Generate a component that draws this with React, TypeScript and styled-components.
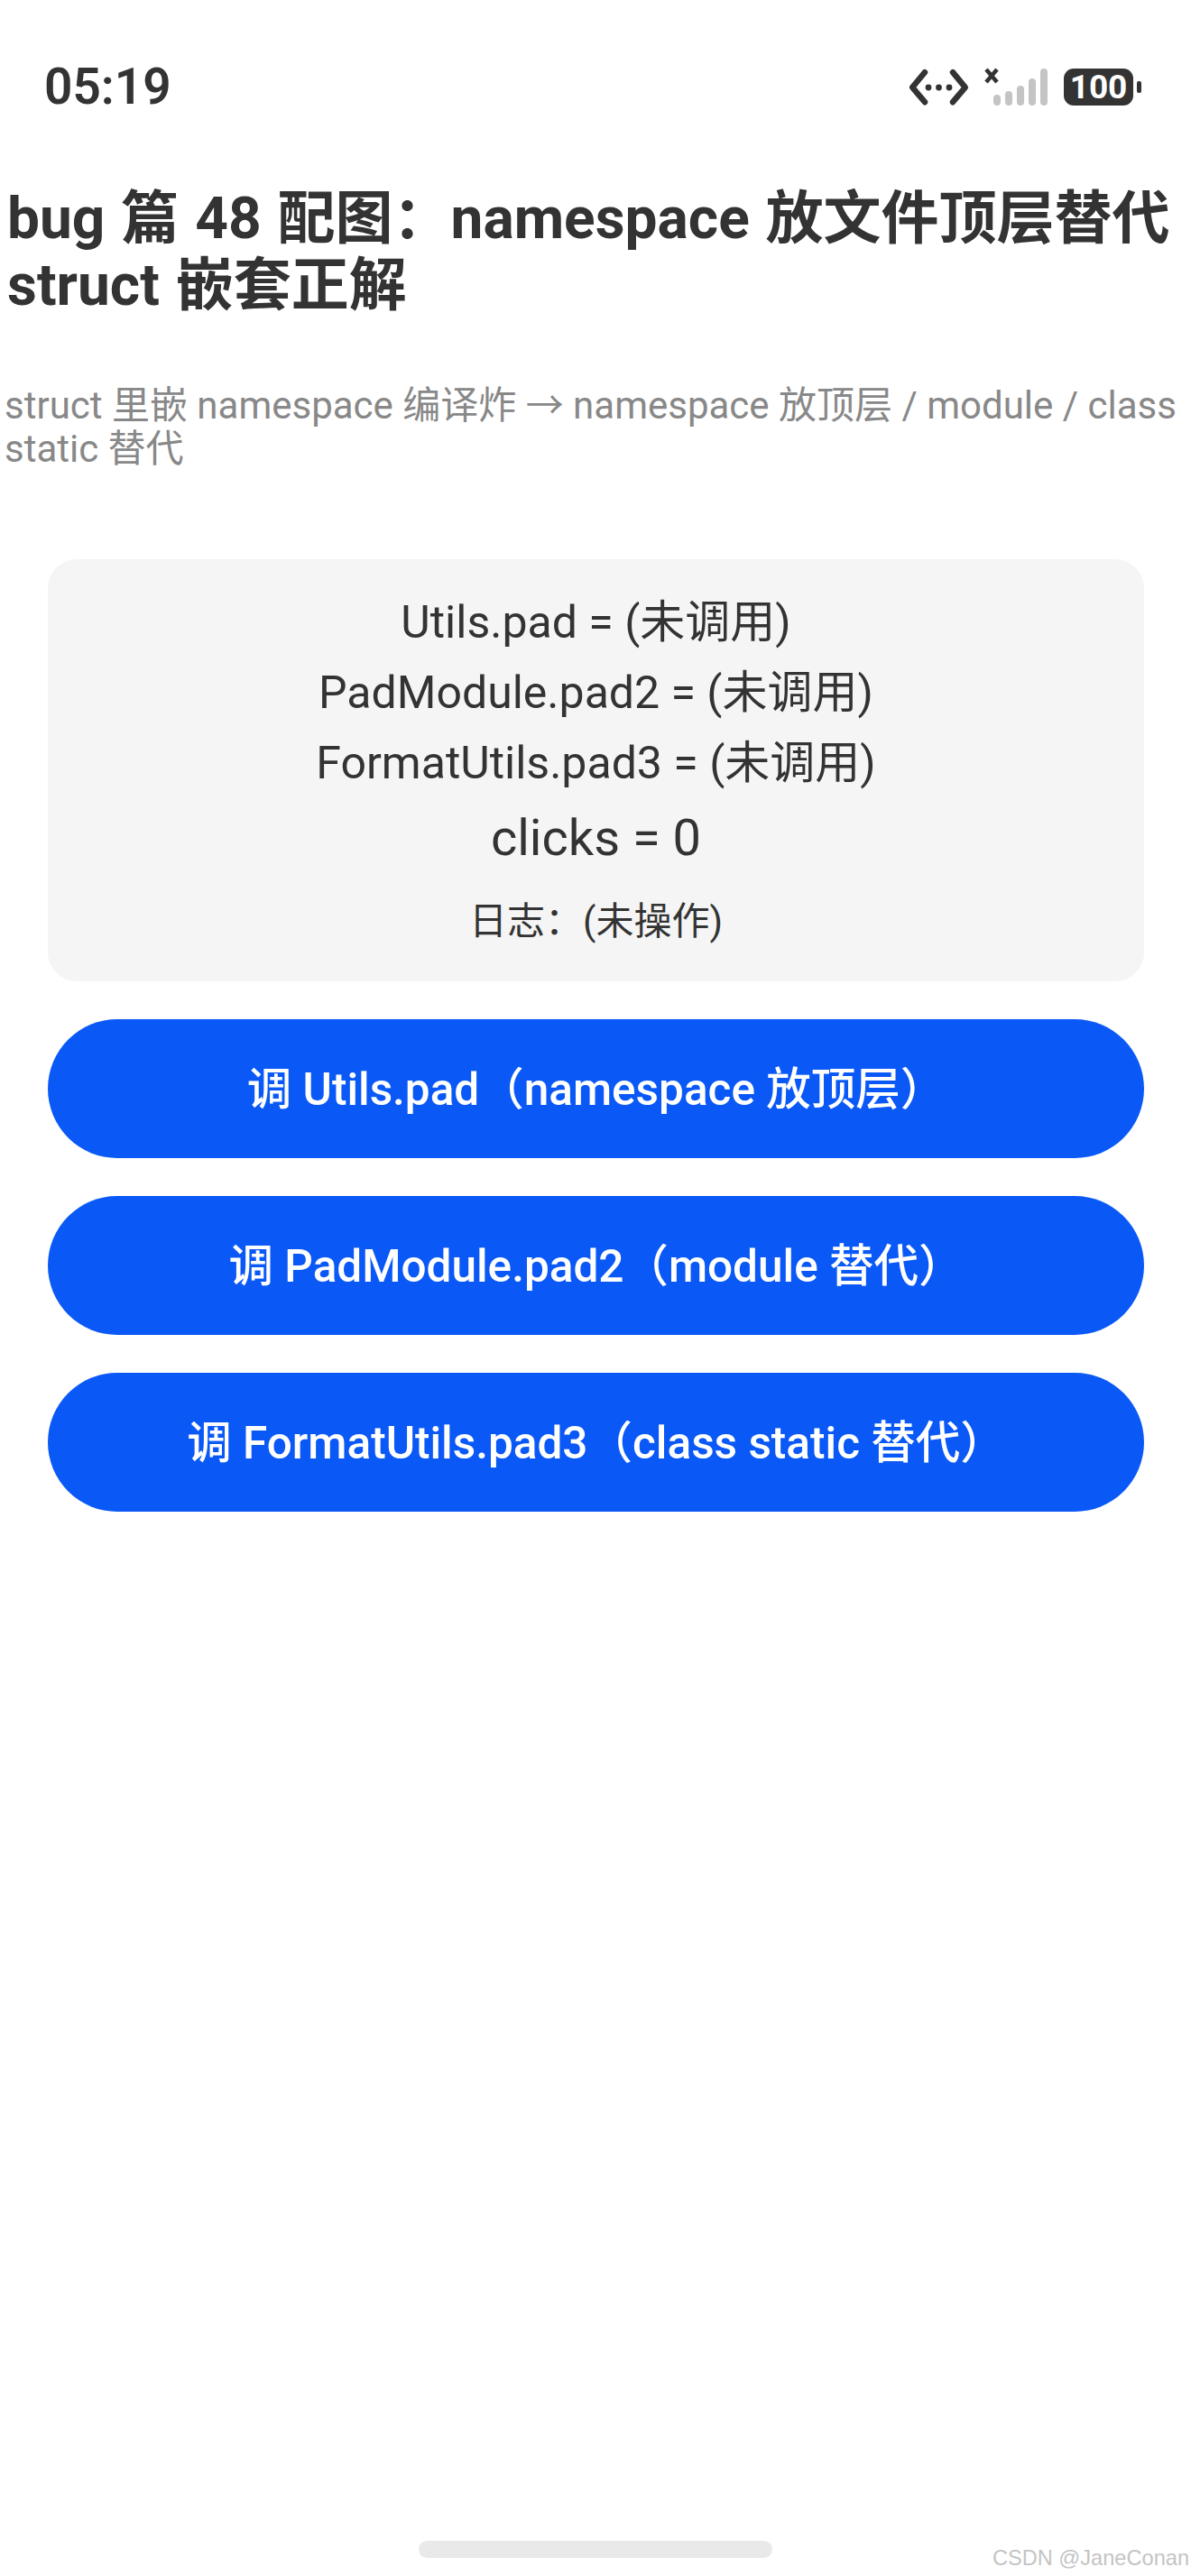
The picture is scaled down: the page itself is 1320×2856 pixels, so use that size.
import React from 'react';
import styled, { createGlobalStyle } from 'styled-components';

const FONT = `Roboto, "Noto Sans CJK SC", sans-serif`;

const GlobalStyle = createGlobalStyle`
  html, body {
    margin: 0;
    padding: 0;
    background: #fff;
  }
`;

const Page = styled.div`
  width: 1320px;
  height: 2856px;
  position: relative;
  overflow: hidden;
  background: #fff;
  font-family: ${FONT};
  color: #333;
`;

const StatusBar = styled.div`
  display: flex;
  align-items: center;
  justify-content: space-between;
  height: 72px;
  padding: 60px 55px 0 49px;
`;

const Time = styled.span`
  font-size: 55px;
  font-weight: 600;
  line-height: 72px;
  color: #333;
`;

const StatusIcons = styled.div`
  display: flex;
  align-items: center;
`;

const SignalIcon = styled.svg`
  margin-left: 14px;
  margin-right: 17px;
`;

const Battery = styled.div`
  position: relative;
  width: 77px;
  height: 41px;
  border-radius: 11px;
  background: #333;
  color: #fff;
  font-size: 37px;
  font-weight: 700;
  line-height: 41px;
  text-align: center;
  margin-right: 9px;

  &::after {
    content: '';
    position: absolute;
    left: 81px;
    top: 14px;
    width: 5px;
    height: 13px;
    border-radius: 2px;
    background: #333;
  }
`;

const Header = styled.header`
  padding: 74px 0 0 5px;
`;

const Title = styled.h1`
  margin: 0;
  padding-left: 3px;
  font-size: 64px;
  line-height: 74px;
  font-weight: 700;
  word-spacing: 2px;
  color: #333;
`;

const Subtitle = styled.p`
  margin: 72px 0 0;
  font-size: 42px;
  line-height: 48px;
  font-weight: 400;
  color: #888;
`;

const Content = styled.main`
  display: flex;
  flex-direction: column;
  gap: 42px;
  padding: 98px 52px 0 53px;
`;

const StateCard = styled.section`
  display: flex;
  flex-direction: column;
  align-items: center;
  height: 468px;
  box-sizing: border-box;
  padding: 31px 0 0;
  background: #f5f5f5;
  border-radius: 32px;
`;

const StateLine = styled.div<{ $size: number; $height: number }>`
  font-size: ${p => p.$size}px;
  line-height: ${p => p.$height}px;
`;

const ActionButton = styled.button`
  display: block;
  width: 100%;
  height: 154px;
  padding: 0 0 8px;
  border: 0;
  border-radius: 77px;
  background: #0a59f7;
  color: #fff;
  font-family: inherit;
  font-size: 49.5px;
  font-weight: 500;
  text-align: center;
`;

const HomeBar = styled.div`
  position: absolute;
  left: 464px;
  top: 2817px;
  width: 392px;
  height: 19px;
  border-radius: 10px;
  background: #e9e9e9;
`;

const Watermark = styled.div`
  position: absolute;
  right: 2px;
  bottom: 6px;
  font-family: "Liberation Sans", sans-serif;
  font-size: 23.6px;
  color: #c4c4c4;
`;

const NetworkIcon = () => (
  <svg width="72" height="48" viewBox="0 0 72 48">
    <g fill="none" stroke="#333" strokeWidth="6.5" strokeLinecap="round" strokeLinejoin="round">
      <path d="M21 8.2 L7.2 24.8 L21 41.2" />
      <path d="M52 8.2 L65.8 24.8 L52 41.2" />
    </g>
    <circle cx="25" cy="25" r="3.4" fill="#333" />
    <circle cx="36.5" cy="25" r="3.4" fill="#333" />
    <circle cx="48" cy="25" r="3.4" fill="#333" />
  </svg>
);

const BARS = [
  { x: 15, top: 34 },
  { x: 28, top: 30 },
  { x: 41, top: 24 },
  { x: 54, top: 16 },
  { x: 67, top: 5 },
];

const Signal = () => (
  <SignalIcon width="72" height="50" viewBox="0 0 72 50">
    <path d="M3 6 L15 20 M15 6 L3 20" fill="none" stroke="#333" strokeWidth="4.5" strokeLinecap="butt" />
    {BARS.map(b => (
      <rect key={b.x} x={b.x - 4} y={b.top} width="8" height={46 - b.top} rx="4" fill="#c4c4c4" />
    ))}
  </SignalIcon>
);

export default function App() {
  return (
    <Page>
      <GlobalStyle />
      <StatusBar>
        <Time>05:19</Time>
        <StatusIcons>
          <NetworkIcon />
          <Signal />
          <Battery>100</Battery>
        </StatusIcons>
      </StatusBar>
      <Header>
        <Title>
          bug 篇 48 配图：namespace 放文件顶层替代
          <br />
          struct 嵌套正解
        </Title>
        <Subtitle>
          struct 里嵌 namespace 编译炸 → namespace 放顶层 / module / class
          <br />
          static 替代
        </Subtitle>
      </Header>
      <Content>
        <StateCard>
          <StateLine $size={50} $height={78}>Utils.pad = (未调用)</StateLine>
          <StateLine $size={50} $height={78}>PadModule.pad2 = (未调用)</StateLine>
          <StateLine $size={50} $height={78}>FormatUtils.pad3 = (未调用)</StateLine>
          <StateLine $size={56} $height={88}>clicks = 0</StateLine>
          <StateLine $size={42} $height={97}>日志：(未操作)</StateLine>
        </StateCard>
        <ActionButton>调 Utils.pad（namespace 放顶层）</ActionButton>
        <ActionButton>调 PadModule.pad2（module 替代）</ActionButton>
        <ActionButton>调 FormatUtils.pad3（class static 替代）</ActionButton>
      </Content>
      <HomeBar />
      <Watermark>CSDN @JaneConan</Watermark>
    </Page>
  );
}
